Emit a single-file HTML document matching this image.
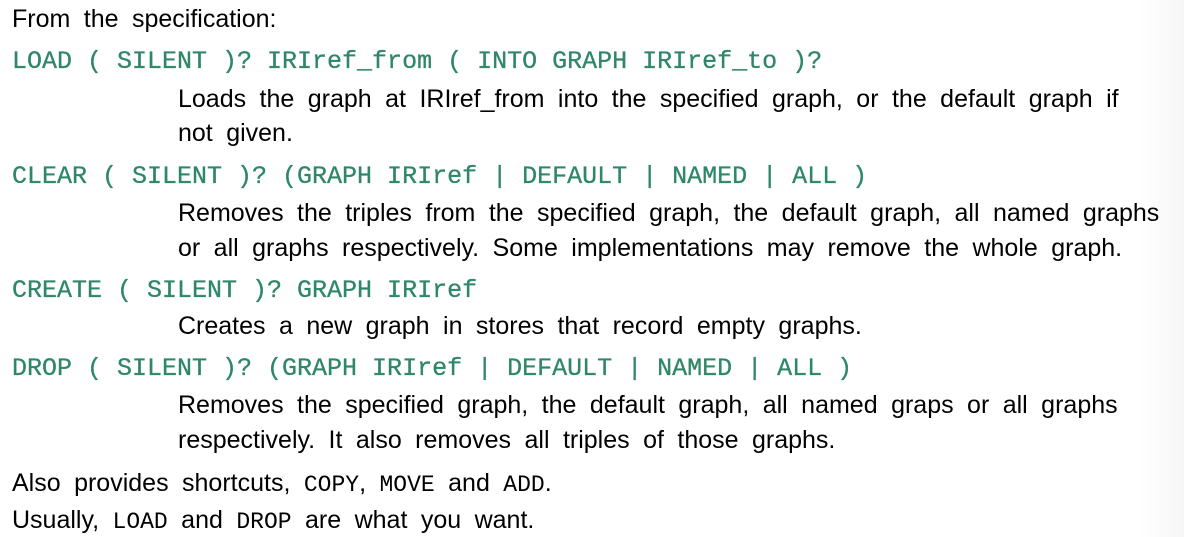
<!DOCTYPE html>
<html><head><meta charset="utf-8"><style>
html,body{margin:0;padding:0}
body{width:1184px;height:536px;position:relative;overflow:hidden;background:linear-gradient(to right,#fff 0,#fff 1140px,#f6f6f6 1184px);color:#000;font-family:"Liberation Sans",sans-serif;font-size:25px;word-spacing:6.5px}
.l{position:absolute;white-space:nowrap;line-height:30px}
.c{font-family:"Liberation Mono",monospace;color:#2f8768;font-size:25px;left:12px;word-spacing:0;-webkit-text-stroke:0.3px #2f8768}
.d{left:178px}
.t{font-family:"Liberation Mono",monospace;font-size:23px}
</style></head><body>
<div class="l" style="left:12px;top:4px">From the specification:</div>
<div class="l c" style="top:47px">LOAD ( SILENT )? IRIref_from ( INTO GRAPH IRIref_to )?</div>
<div class="l d" style="top:84px">Loads the graph at IRIref_from into the specified graph, or the default graph if</div>
<div class="l d" style="top:118px">not given.</div>
<div class="l c" style="top:162px">CLEAR ( SILENT )? (GRAPH IRIref | DEFAULT | NAMED | ALL )</div>
<div class="l d" style="top:198px">Removes the triples from the specified graph, the default graph, all named graphs</div>
<div class="l d" style="top:233px">or all graphs respectively. Some implementations may remove the whole graph.</div>
<div class="l c" style="top:276px">CREATE ( SILENT )? GRAPH IRIref</div>
<div class="l d" style="top:311px">Creates a new graph in stores that record empty graphs.</div>
<div class="l c" style="top:354px">DROP ( SILENT )? (GRAPH IRIref | DEFAULT | NAMED | ALL )</div>
<div class="l d" style="top:390px">Removes the specified graph, the default graph, all named graps or all graphs</div>
<div class="l d" style="top:425px">respectively. It also removes all triples of those graphs.</div>
<div class="l" style="left:12px;top:468px">Also provides shortcuts, <span class="t">COPY</span>, <span class="t">MOVE</span> and <span class="t">ADD</span>.</div>
<div class="l" style="left:12px;top:505px">Usually, <span class="t">LOAD</span> and <span class="t">DROP</span> are what you want.</div>
</body></html>
